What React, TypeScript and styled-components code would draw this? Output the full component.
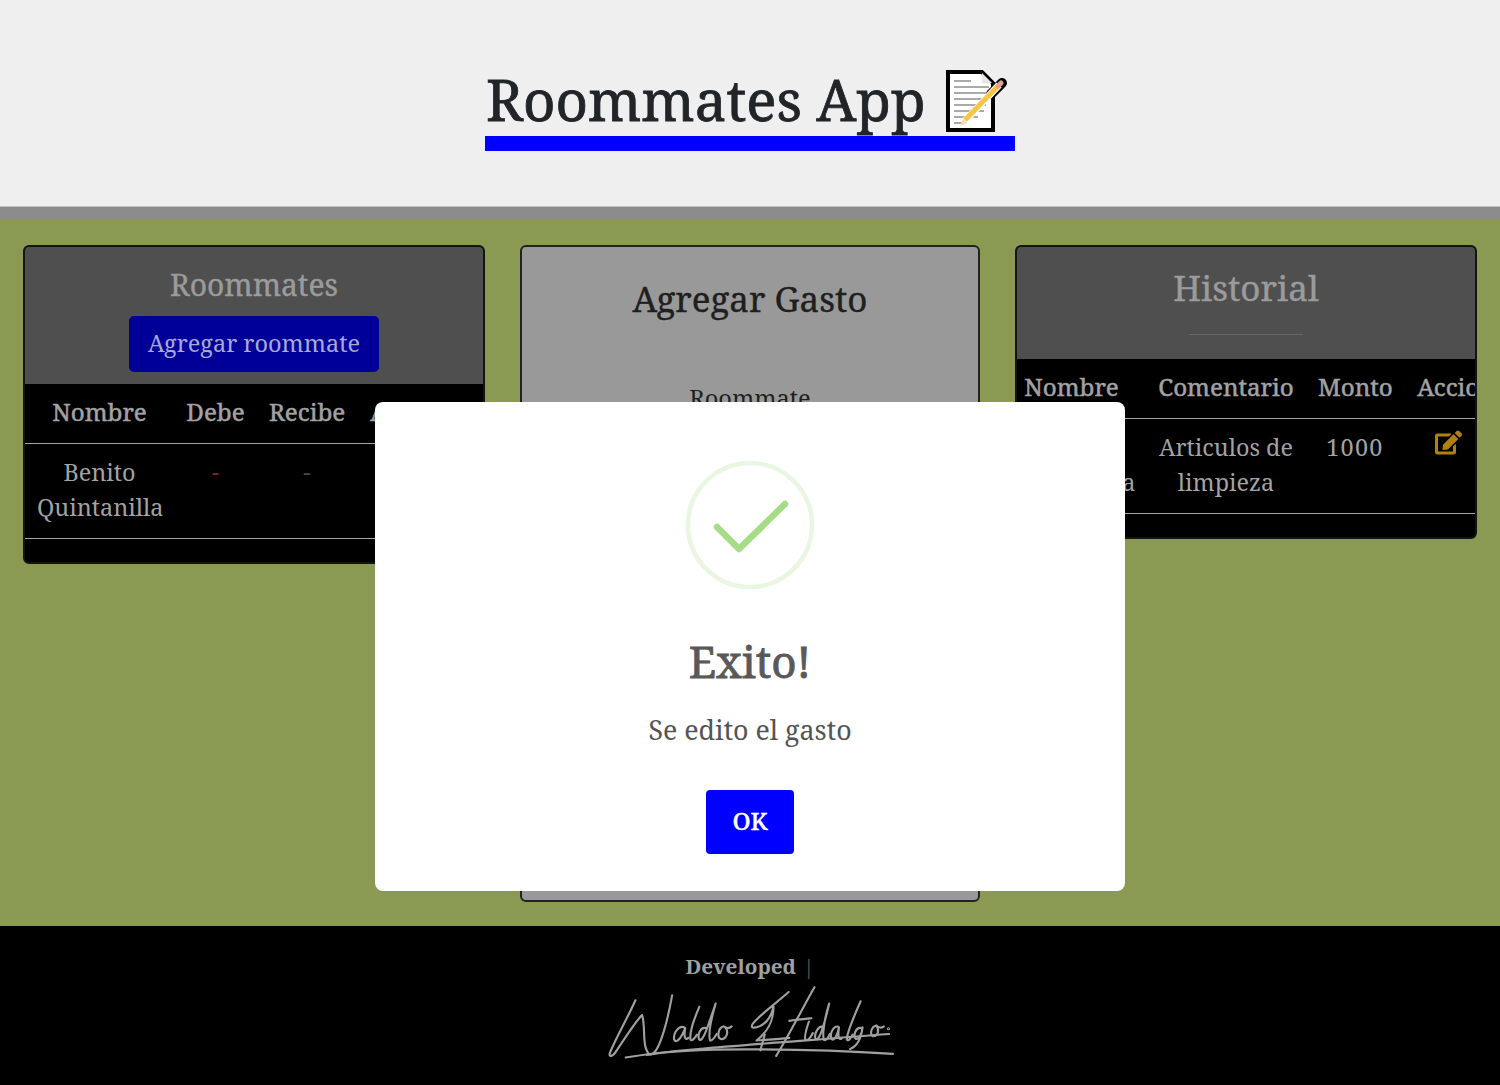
import React from "react";
import styled, { createGlobalStyle } from "styled-components";
import { FaEdit } from "react-icons/fa";

const GlobalStyle = createGlobalStyle`
  html, body {
    margin: 0;
    padding: 0;
    background: #000;
    font-family: "Noto Serif", "DejaVu Serif", serif;
  }
  * {
    box-sizing: border-box;
  }
`;

const Page = styled.div`
  display: flex;
  flex-direction: column;
  height: 1085px;
  overflow: hidden;
`;

const Header = styled.header`
  display: flex;
  justify-content: center;
  align-items: flex-start;
  height: 220px;
  padding-top: 67px;
  background: #efefef;
  border-bottom: 13px solid #8c8c8c;
  box-shadow: inset 0 -1px #c4c4c4;
`;

const Title = styled.h1`
  display: flex;
  align-items: flex-start;
  justify-content: space-between;
  width: 530px;
  height: 84px;
  margin: 0;
  padding: 0 6px 0 1px;
  font-size: 56.4px;
  font-weight: 400;
  line-height: 66px;
  -webkit-text-stroke: 0.8px #212529;
  color: #212529;
  border-bottom: 15px solid #0000ff;
`;

const NoteSvg = styled.svg`
  display: block;
  margin-top: 2px;
`;

const Main = styled.main`
  display: grid;
  grid-template-columns: 462px 460px 462px;
  justify-content: space-between;
  align-items: start;
  height: 706px;
  padding: 25px 23px 0;
  background: #8a9a53;
`;

const Card = styled.section<{ $light?: boolean }>`
  overflow: hidden;
  background: ${(p) => (p.$light ? "#999999" : "#000")};
  border: ${(p) => (p.$light ? "2px solid #222" : "2px solid #141414")};
  border-radius: 6px;
  min-height: ${(p) => (p.$light ? "657px" : "0")};
`;

const CardHead = styled.div<{ $tall?: boolean }>`
  display: flex;
  flex-direction: column;
  align-items: center;
  height: ${(p) => (p.$tall ? "112px" : "137px")};
  padding-top: 19px;
  background: #4f4f4f;
`;

const CardTitle = styled.h2<{ $big?: boolean }>`
  margin: 0;
  font-size: ${(p) => (p.$big ? "35px" : "30px")};
  line-height: ${(p) => (p.$big ? "43px" : "38px")};
  font-weight: 400;
  -webkit-text-stroke: 0.4px #9b9b9b;
  color: #9b9b9b;
`;

const AddButton = styled.button`
  width: 250px;
  height: 56px;
  margin-top: 12px;
  padding: 0 0 2px;
  font-family: inherit;
  font-size: 23.5px;
  color: #a9a9d8;
  background: #000099;
  border: 0;
  border-radius: 5px;
`;

const HeadRule = styled.hr`
  width: 114px;
  height: 1px;
  margin: 25px 0 0;
  background: #666;
  border: 0;
`;

const TableClip = styled.div`
  overflow: hidden;
`;

const Table = styled.table<{ $shift?: number; $width: number }>`
  width: ${(p) => p.$width}px;
  margin-left: ${(p) => p.$shift ?? 0}px;
  margin-bottom: 23px;
  border-collapse: collapse;
  table-layout: fixed;
  color: #a3a3a3;
  font-size: 23.4px;
  line-height: 35px;

  th {
    height: 59px;
    padding: 0 12px 3px;
    font-size: 24.2px;
    font-weight: 400;
    -webkit-text-stroke: 0.5px #a3a3a3;
    text-align: center;
    white-space: nowrap;
    border-bottom: 1px solid #a3a3a3;
  }

  td {
    height: 95px;
    padding: 11px 12px 0;
    text-align: center;
    vertical-align: top;
    border-bottom: 1px solid #a3a3a3;
  }
`;

const Dash = styled.span<{ $color: string }>`
  color: ${(p) => p.$color};
`;

const Amount = styled.span`
  letter-spacing: 1.3px;
`;

const EditIcon = styled(FaEdit)`
  display: block;
  margin: -1px 0 0 19px;
  font-size: 27px;
  color: #b2800c;
`;

const FormTitle = styled.h2`
  margin: 0;
  padding-top: 28px;
  font-size: 35px;
  line-height: 48px;
  font-weight: 400;
  -webkit-text-stroke: 0.4px #1f1f1f;
  text-align: center;
  color: #1f1f1f;
`;

const FormLabel = styled.div`
  margin-top: 59px;
  font-size: 23.6px;
  line-height: 32px;
  text-align: center;
  color: #1f1f1f;
`;

const Footer = styled.footer`
  display: flex;
  flex-direction: column;
  align-items: center;
  height: 159px;
  padding-top: 24px;
  background: #000;
`;

const Developed = styled.div`
  display: flex;
  gap: 7px;
  font-size: 20.7px;
  line-height: 32px;
  font-weight: 700;
  color: #a0a0a0;
`;

const Pipe = styled.span`
  font-weight: 400;
  color: #555;
`;

const Signature = styled.svg`
  display: block;
  margin-top: -3px;
  width: 320px;
  height: 108px;
`;

const Overlay = styled.div`
  position: fixed;
  inset: 0;
  display: flex;
  justify-content: center;
  align-items: flex-start;
  padding-top: 402px;
`;

const Modal = styled.div`
  display: flex;
  flex-direction: column;
  align-items: center;
  width: 750px;
  height: 489px;
  padding-top: 57px;
  background: #fff;
  border-radius: 8px;
`;

const SuccessIcon = styled.svg`
  display: block;
  width: 130px;
  height: 130px;
`;

const ModalTitle = styled.h2`
  margin: 43px 0 0;
  font-size: 44px;
  line-height: 58px;
  font-weight: 400;
  -webkit-text-stroke: 0.8px #595959;
  color: #595959;
`;

const ModalText = styled.p`
  margin: 21px 0 0;
  font-size: 26.8px;
  line-height: 38px;
  color: #545454;
`;

const OkButton = styled.button`
  width: 88px;
  height: 64px;
  margin-top: 41px;
  padding: 0 0 4px;
  font-family: inherit;
  font-size: 24px;
  font-weight: 500;
  -webkit-text-stroke: 0.4px #fff;
  color: #fff;
  background: #0000ff;
  border: 0;
  border-radius: 4px;
`;

const NoteIcon = () => (
  <NoteSvg width="64" height="64" viewBox="0 0 64 64" aria-hidden="true">
    <path d="M3 3h34l11 11v47H3z" fill="#fff" stroke="#000" strokeWidth="4" />
    <path d="M37 4l10 10H37z" fill="#e6e6e6" />
    <path d="M9 12h17M9 18h35M9 24h32M9 30h34M9 36h32M9 42h30M9 48h24M9 54h8" stroke="#aaa" strokeWidth="2" />
    <path d="M46 25L57 14" stroke="#000" strokeWidth="10" strokeLinecap="round" />
    <path d="M19 53L54 16" stroke="#fff" strokeWidth="7" />
    <path d="M20 51L54 16" stroke="#f9c544" strokeWidth="5" />
    <path d="M53 17l3-3" stroke="#e4a091" strokeWidth="5" strokeLinecap="round" />
    <path d="M15 57l3-7 4 4z" fill="#f5d9ae" />
  </NoteSvg>
);

const SignatureMark = () => (
  <Signature viewBox="0 0 960 324" aria-hidden="true">
    <g fill="none" stroke="#a0a0a0" strokeWidth="6.5" strokeLinecap="round" strokeLinejoin="round">
      <path d="M130 65C105 120 70 180 52 225C47 240 60 238 70 222C95 185 130 130 150 110C162 145 148 205 172 230C195 240 222 160 242 50" />
      <path d="M280 148C262 140 245 165 248 185C255 200 270 180 282 150C278 175 280 190 292 180" />
      <path d="M325 85C310 120 295 165 298 185C302 192 312 180 318 170" />
      <path d="M345 150C330 145 318 170 325 185C335 192 345 165 375 75C362 120 352 170 358 188C365 190 372 178 378 168" />
      <path d="M398 145C382 150 378 180 392 184C408 184 418 160 402 146C410 152 418 150 424 145" />
      <path d="M598 40C565 70 515 105 490 135C478 150 492 152 510 144C530 135 545 115 552 85C552 130 535 160 500 188C520 186 560 185 600 180" />
      <path d="M677 25C640 90 600 170 560 235" />
      <path d="M525 170C520 190 515 205 512 218" />
      <path d="M600 128C620 124 645 122 668 120" />
      <path d="M660 130C650 160 645 180 650 186C658 190 668 175 672 165" />
      <path d="M705 145C690 142 675 165 680 182C688 192 700 170 722 75C708 120 700 170 706 186C712 190 720 178 724 168" />
      <path d="M748 145C733 145 722 170 730 184C738 190 748 170 752 148C748 170 750 188 760 182" />
      <path d="M818 68C800 110 775 165 776 185C780 192 788 180 794 170" />
      <path d="M820 150C805 145 795 170 802 182C812 188 822 170 824 148C820 180 810 205 786 214" />
      <path d="M866 142C852 145 844 168 856 175C872 175 876 155 866 142C872 150 884 150 889 145" />
      <path d="M100 240C250 215 500 200 905 168" />
      <path d="M165 232C300 205 700 215 917 229" />
      <circle cx="903" cy="152" r="1.5" />
    </g>
  </Signature>
);

const App: React.FC = () => {
  return (
    <Page>
      <GlobalStyle />
      <Header>
        <Title>
          <span>Roommates App</span>
          <NoteIcon />
        </Title>
      </Header>
      <Main>
        <Card>
          <CardHead>
            <CardTitle>Roommates</CardTitle>
            <AddButton>Agregar roommate</AddButton>
          </CardHead>
          <TableClip>
            <Table $width={460}>
              <colgroup>
                <col width="149" />
                <col width="83" />
                <col width="100" />
                <col width="128" />
              </colgroup>
              <thead>
                <tr>
                  <th>Nombre</th>
                  <th>Debe</th>
                  <th>Recibe</th>
                  <th>Acciones</th>
                </tr>
              </thead>
              <tbody>
                <tr>
                  <td>Benito Quintanilla</td>
                  <td>
                    <Dash $color="#7a2a2a">-</Dash>
                  </td>
                  <td>
                    <Dash $color="#4a4a4a">-</Dash>
                  </td>
                  <td />
                </tr>
              </tbody>
            </Table>
          </TableClip>
        </Card>
        <Card $light>
          <FormTitle>Agregar Gasto</FormTitle>
          <FormLabel>Roommate</FormLabel>
        </Card>
        <Card>
          <CardHead $tall>
            <CardTitle $big>Historial</CardTitle>
            <HeadRule />
          </CardHead>
          <TableClip>
            <Table $shift={-20} $width={535}>
              <colgroup>
                <col width="149" />
                <col width="160" />
                <col width="98" />
                <col width="128" />
              </colgroup>
              <thead>
                <tr>
                  <th>Nombre</th>
                  <th>Comentario</th>
                  <th>Monto</th>
                  <th>Acciones</th>
                </tr>
              </thead>
              <tbody>
                <tr>
                  <td>Benito Quintanilla</td>
                  <td>Articulos de limpieza</td>
                  <td>
                    <Amount>1000</Amount>
                  </td>
                  <td>
                    <EditIcon />
                  </td>
                </tr>
              </tbody>
            </Table>
          </TableClip>
        </Card>
      </Main>
      <Footer>
        <Developed>
          <span>Developed</span>
          <Pipe>|</Pipe>
        </Developed>
        <SignatureMark />
      </Footer>
      <Overlay>
        <Modal>
          <SuccessIcon viewBox="0 0 130 130" aria-hidden="true">
            <circle cx="65" cy="66" r="62" fill="none" stroke="#e9f6e1" strokeWidth="4.5" />
            <path d="M32 68l22 22 46-45" fill="none" stroke="#a5dc86" strokeWidth="6.5" strokeLinecap="round" strokeLinejoin="round" />
          </SuccessIcon>
          <ModalTitle>Exito!</ModalTitle>
          <ModalText>Se edito el gasto</ModalText>
          <OkButton>OK</OkButton>
        </Modal>
      </Overlay>
    </Page>
  );
};

export default App;
